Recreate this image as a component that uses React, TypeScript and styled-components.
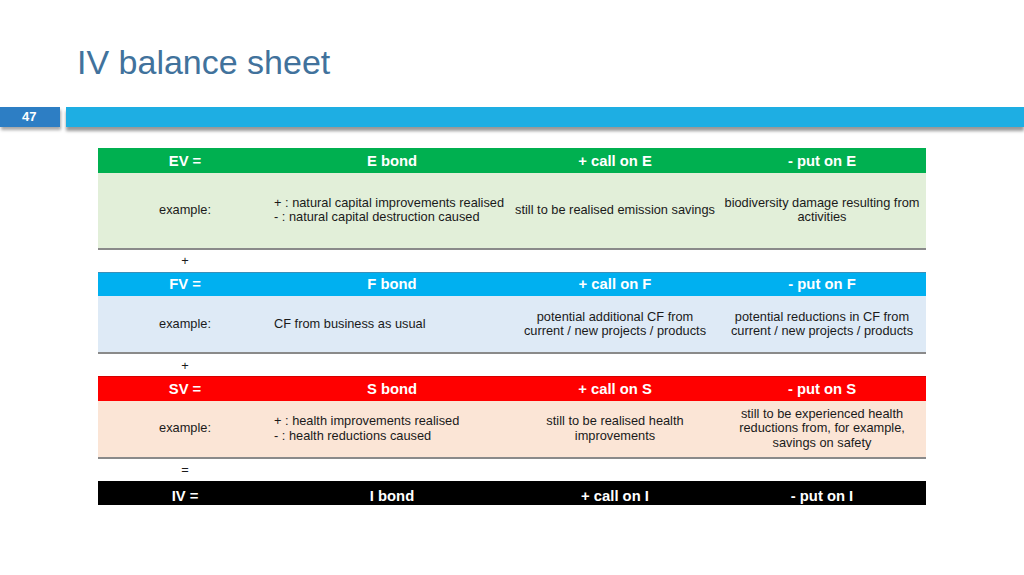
import React from "react";
import styled, { createGlobalStyle } from "styled-components";

const Global = createGlobalStyle`
  html, body { margin: 0; padding: 0; background: #ffffff; }
  body { font-family: "Liberation Sans", Arial, sans-serif; }
`;

const Slide = styled.div`
  width: 1024px;
  height: 575px;
  position: relative;
  overflow: hidden;
  background: #fff;
`;

const Title = styled.h1`
  margin: 0;
  padding: 42px 0 0 77px;
  height: 65px;
  box-sizing: border-box;
  font-family: "Liberation Sans", Arial, sans-serif;
  font-weight: 400;
  font-size: 34px;
  line-height: 40px;
  color: #41729c;
`;

const BarRow = styled.div`
  display: flex;
  margin-top: 42px;
  height: 20px;
  gap: 6px;
`;

const NumberBox = styled.div`
  width: 60px;
  height: 20px;
  background: #2d7ec4;
  color: #fff;
  font-weight: 700;
  font-size: 13px;
  line-height: 19px;
  padding-left: 22px;
  box-sizing: border-box;
  box-shadow: 1px 3px 3px rgba(0, 0, 0, 0.35);
`;

const BlueBar = styled.div`
  flex: 1;
  height: 20px;
  background: #1eaee3;
  box-shadow: 0 4px 3px rgba(0, 0, 0, 0.4);
`;

const TableWrap = styled.div`
  margin: 21px 0 0 98px;
  width: 828px;
`;

const Table = styled.table`
  width: 828px;
  border-collapse: collapse;
  table-layout: fixed;
`;

const Head = styled.th<{ $bg: string; $top?: string; $low?: boolean }>`
  background: ${(p) => p.$bg};
  color: #fff;
  font-weight: 700;
  font-size: 14.8px;
  height: 24px;
  box-sizing: border-box;
  padding: ${(p) => (p.$low ? "6px 0 0" : "0")};
  line-height: ${(p) => (p.$low ? "17px" : "normal")};
  text-align: center;
  vertical-align: middle;
  border-top: 1px solid ${(p) => p.$top || p.$bg};
`;

const Cell = styled.td<{ $bg: string; $h: number; $left?: boolean }>`
  background: ${(p) => p.$bg};
  height: ${(p) => p.$h}px;
  padding: 0 2px;
  font-size: 12.8px;
  line-height: 14.5px;
  color: #1a1a1a;
  text-align: ${(p) => (p.$left ? "left" : "center")};
  vertical-align: middle;
  border-bottom: 2px solid #8a8a8a;
  box-sizing: border-box;
`;

const OpCell = styled.td`
  height: 22px;
  padding: 0;
  font-size: 12.8px;
  color: #1a1a1a;
  text-align: center;
  vertical-align: middle;
`;

type Block = {
  letter: string;
  head: string;
  topLine?: string;
  body: string;
  h: number;
  b: React.ReactNode;
  c: React.ReactNode;
  d: React.ReactNode;
  op?: string;
};

const blocks: Block[] = [
  {
    letter: "E",
    head: "#00b050",
    body: "#e2efd9",
    h: 76,
    b: (
      <>
        + : natural capital improvements realised
        <br />- : natural capital destruction caused
      </>
    ),
    c: "still to be realised emission savings",
    d: (
      <>
        biodiversity damage resulting from
        <br />
        activities
      </>
    ),
    op: "+",
  },
  {
    letter: "F",
    head: "#00b0f0",
    topLine: "#3a8fb8",
    body: "#deeaf6",
    h: 57,
    b: "CF from business as usual",
    c: (
      <>
        potential additional CF from
        <br />
        current / new projects / products
      </>
    ),
    d: (
      <>
        potential reductions in CF from
        <br />
        current / new projects / products
      </>
    ),
    op: "+",
  },
  {
    letter: "S",
    head: "#ff0000",
    topLine: "#d40000",
    body: "#fbe5d6",
    h: 57,
    b: (
      <>
        + : health improvements realised
        <br />- : health reductions caused
      </>
    ),
    c: (
      <>
        still to be realised health
        <br />
        improvements
      </>
    ),
    d: (
      <>
        still to be experienced health
        <br />
        reductions from, for example,
        <br />
        savings on safety
      </>
    ),
    op: "=",
  },
];

export default function App() {
  return (
    <Slide>
      <Global />
      <Title>IV balance sheet</Title>
      <BarRow>
        <NumberBox>47</NumberBox>
        <BlueBar />
      </BarRow>
      <TableWrap>
        <Table>
          <colgroup>
            <col style={{ width: 174 }} />
            <col style={{ width: 240 }} />
            <col style={{ width: 206 }} />
            <col style={{ width: 208 }} />
          </colgroup>
          <tbody>
            {blocks.map((bl) => (
              <React.Fragment key={bl.letter}>
                <tr>
                  <Head $bg={bl.head} $top={bl.topLine}>{bl.letter}V =</Head>
                  <Head $bg={bl.head} $top={bl.topLine}>{bl.letter} bond</Head>
                  <Head $bg={bl.head} $top={bl.topLine}>+ call on {bl.letter}</Head>
                  <Head $bg={bl.head} $top={bl.topLine}>- put on {bl.letter}</Head>
                </tr>
                <tr>
                  <Cell $bg={bl.body} $h={bl.h}>example:</Cell>
                  <Cell $bg={bl.body} $h={bl.h} $left>{bl.b}</Cell>
                  <Cell $bg={bl.body} $h={bl.h}>{bl.c}</Cell>
                  <Cell $bg={bl.body} $h={bl.h}>{bl.d}</Cell>
                </tr>
                <tr>
                  <OpCell>{bl.op}</OpCell>
                  <OpCell />
                  <OpCell />
                  <OpCell />
                </tr>
              </React.Fragment>
            ))}
            <tr>
              <Head $bg="#000000" $low>IV =</Head>
              <Head $bg="#000000" $low>I bond</Head>
              <Head $bg="#000000" $low>+ call on I</Head>
              <Head $bg="#000000" $low>- put on I</Head>
            </tr>
          </tbody>
        </Table>
      </TableWrap>
    </Slide>
  );
}
